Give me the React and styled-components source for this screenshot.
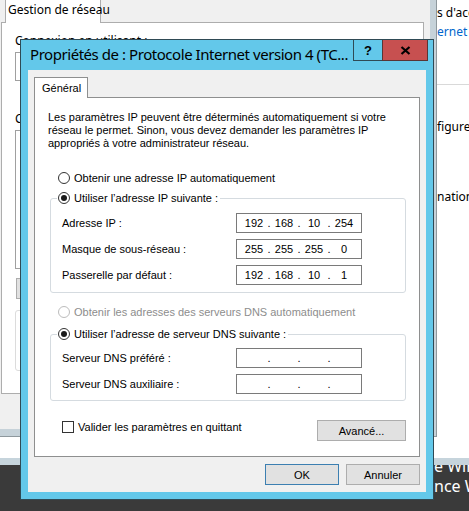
import React from "react";
import styled, { createGlobalStyle } from "styled-components";

const GlobalStyle = createGlobalStyle`
  html, body {
    margin: 0;
    padding: 0;
  }

  body {
    width: 469px;
    height: 511px;
    overflow: hidden;
    background: #3a3a3a;
    font-family: "Liberation Sans", Arial, sans-serif;
    font-size: 11px;
    color: #000;
  }

  * {
    box-sizing: border-box;
  }
`;

const Desktop = styled.div`
  position: relative;
  width: 469px;
  height: 511px;
  overflow: hidden;
  background: #3a3a3a;
`;

const Watermark = styled.div`
  position: absolute;
  left: 434px;
  top: 456px;
  color: #fff;
  font-family: "Noto Sans", sans-serif;
  font-size: 16px;
  line-height: 20px;
  white-space: nowrap;
`;

/* window behind everything (network center) */
const BackWindow = styled.div`
  position: absolute;
  left: 0;
  top: 0;
  right: 0;
  height: 465px;
  background: #fff;
  border-bottom: 7px solid #c6d4dc;
  padding: 5px 0 0 437px;
  overflow: hidden;
  font-family: "Noto Sans", sans-serif;
  font-size: 12px;
  line-height: 16px;
  white-space: nowrap;
`;

const SideLine = styled.div`
  margin-top: ${(p) => p.$gap || 0}px;
  color: ${(p) => (p.$link ? "#0066cc" : "#000")};
`;

const SideRule = styled.div`
  height: 1px;
  margin-top: ${(p) => p.$gap}px;
  background: #d9d9d9;
`;

/* network adapter properties window */
const HostWindow = styled.div`
  position: absolute;
  left: -8px;
  top: -40px;
  width: 445px;
  height: 477px;
  border: 1px solid #8e989d;
  background: #c6d2d9;
  padding: 39px 6px 6px;
`;

const HostClient = styled.div`
  height: 430px;
  background: #f0f0f0;
  padding-left: 2px;
  font-family: "Noto Sans", sans-serif;
  font-size: 12px;
  line-height: 14px;
  white-space: nowrap;
`;

const HostTab = styled.div`
  position: relative;
  z-index: 1;
  width: 96px;
  height: 24px;
  margin: -1px 0 -1px 4px;
  padding: 2px 0 0 2px;
  line-height: 16px;
  background: #fff;
  border: 1px solid #adadad;
  border-bottom: none;
`;

const HostPanel = styled.div`
  width: 423px;
  height: 372px;
  padding: 11px 13px 0;
  background: #fff;
  border: 1px solid #adadad;
`;

const HostLabel = styled.div`
  margin-top: ${(p) => p.$gap || 0}px;
`;

const HostBox = styled.div`
  height: ${(p) => p.$h}px;
  margin-top: 4px;
  border: 1px solid #a0a0a0;
`;

const HostButton = styled.div`
  width: 90px;
  height: 21px;
  margin: 9px 0 0 1px;
  background: #e1e1e1;
  border: 1px solid #adadad;
`;

const HostGroup = styled.div`
  height: 61px;
  margin-top: 11px;
  border: 1px solid #dcdcdc;
  border-radius: 3px;
`;

/* IPv4 dialog */
const Dialog = styled.div`
  position: absolute;
  left: 20px;
  top: 39px;
  width: 414px;
  height: 461px;
  display: flex;
  flex-direction: column;
  padding: 0 7px 7px;
  background: #63c8ea;
  border: 1px solid #2f4a55;
`;

const TitleBar = styled.div`
  height: 30px;
  display: flex;
  align-items: flex-start;
  justify-content: space-between;
`;

const Title = styled.div`
  flex: 1;
  min-width: 0;
  overflow: hidden;
  padding: 3px 0 0 2px;
  font-family: "Noto Sans", sans-serif;
  font-size: 15px;
  letter-spacing: -0.45px;
  line-height: 22px;
  white-space: nowrap;
`;

const CaptionButtons = styled.div`
  flex: none;
  display: flex;
  margin-right: -2px;
`;

const CaptionButton = styled.div`
  width: ${(p) => (p.$close ? 46 : 29)}px;
  height: 21px;
  display: flex;
  align-items: center;
  justify-content: center;
  background: ${(p) => (p.$close ? "#c75050" : "transparent")};
  border: 1px solid ${(p) => (p.$close ? "#5a3434" : "#2f4a55")};
  border-top: none;
  border-right: ${(p) => (p.$close ? "1px solid #5a3434" : "none")};
  font-family: "Liberation Sans", Arial, sans-serif;
  font-size: 13px;
  font-weight: bold;
`;

const Client = styled.div`
  flex: 1;
  display: flex;
  flex-direction: column;
  padding: 7px 6px;
  background: #f0f0f0;
`;

const Tab = styled.div`
  position: relative;
  z-index: 1;
  align-self: flex-start;
  width: 54px;
  height: 21px;
  margin-bottom: -1px;
  padding: 4px 0 0 7px;
  line-height: 13px;
  background: #fff;
  border: 1px solid #8e8f8f;
  border-bottom: none;
`;

const Panel = styled.div`
  height: 360px;
  display: flex;
  flex-direction: column;
  padding: 13px 13px 0;
  background: #fff;
  border: 1px solid #8e8f8f;
`;

const Intro = styled.p`
  margin: 0;
  line-height: 13px;
  white-space: nowrap;
`;

const Choice = styled.label`
  display: flex;
  align-items: center;
  gap: 4px;
  height: 14px;
  margin: ${(p) => p.$gap || 0}px 0 0 10px;
  color: ${(p) => (p.$disabled ? "#8d8d8d" : "#000")};
  white-space: nowrap;
`;

const Radio = styled.span`
  flex: none;
  width: 12px;
  height: 12px;
  display: inline-flex;
  align-items: center;
  justify-content: center;
  border-radius: 50%;
  background: #fff;
  border: 1px solid ${(p) => (p.$disabled ? "#bcbcbc" : "#333")};

  &::after {
    content: "";
    display: ${(p) => (p.$checked ? "block" : "none")};
    width: 6px;
    height: 6px;
    border-radius: 50%;
    background: #1a1a1a;
  }
`;

const Group = styled.fieldset`
  min-width: 0;
  margin: ${(p) => p.$gap}px 0 0 2px;
  padding: ${(p) => p.$top}px 0 ${(p) => p.$bottom}px 6px;
  border: 1px solid #d5dbe0;
  border-radius: 3px;
`;

const Legend = styled.legend`
  display: flex;
  align-items: center;
  gap: 4px;
  height: 14px;
  padding: 0 2px 0 1px;
  white-space: nowrap;
`;

const FieldGrid = styled.div`
  display: grid;
  grid-template-columns: 174px 126px;
  row-gap: 6px;
  align-items: center;
  padding-left: 5px;
  white-space: nowrap;
`;

const IpBox = styled.div`
  height: 20px;
  display: flex;
  align-items: center;
  padding-left: 5px;
  background: #fff;
  border: 1px solid #7a7a7a;
`;

const Octet = styled.span`
  width: 24px;
  text-align: center;
`;

const Dot = styled.span`
  width: 6px;
  text-align: center;
`;

const Footer = styled.div`
  display: flex;
  align-items: flex-start;
  justify-content: space-between;
  margin-top: 19px;
`;

const Check = styled.label`
  display: flex;
  align-items: center;
  gap: 4px;
  height: 14px;
  margin-left: 14px;
  white-space: nowrap;
`;

const CheckBox = styled.span`
  width: 12px;
  height: 12px;
  background: #fff;
  border: 1px solid #333;
`;

const Button = styled.div`
  width: ${(p) => p.$w}px;
  height: 21px;
  display: flex;
  align-items: center;
  justify-content: center;
  background: #e1e1e1;
  border: 1px solid ${(p) => (p.$default ? "#3c7fb1" : "#adadad")};
`;

const ButtonRow = styled.div`
  display: flex;
  justify-content: flex-end;
  gap: 7px;
  margin-top: 7px;
`;

const IpField = ({ value }) => {
  const parts = value ? value.split(".") : ["", "", "", ""];
  return (
    <IpBox>
      {parts.map((part, i) => (
        <React.Fragment key={i}>
          {i > 0 && <Dot>.</Dot>}
          <Octet>{part}</Octet>
        </React.Fragment>
      ))}
    </IpBox>
  );
};

const CloseGlyph = () => (
  <svg width="11" height="9" viewBox="0 0 11 9">
    <path d="M1.5 1 L9.5 8 M9.5 1 L1.5 8" stroke="#000" strokeWidth="2.2" />
  </svg>
);

const App = () => {
  return (
    <Desktop>
      <GlobalStyle />

      <Watermark>
        <div>e Windows</div>
        <div>nce Windows</div>
      </Watermark>

      <BackWindow>
        <SideLine>s d'accès :</SideLine>
        <SideLine $gap={3} $link>
          ernet
        </SideLine>
        <SideRule $gap={44} />
        <SideLine $gap={34}>figurer</SideLine>
        <SideLine $gap={54}>nations</SideLine>
      </BackWindow>

      <HostWindow>
        <HostClient>
          <HostTab>Gestion de réseau</HostTab>
          <HostPanel>
            <HostLabel>Connexion en utilisant :</HostLabel>
            <HostBox $h={29} />
            <HostLabel $gap={31}>
              Cette connexion utilise les éléments suivants :
            </HostLabel>
            <HostBox $h={139} />
            <HostButton />
            <HostGroup />
          </HostPanel>
        </HostClient>
      </HostWindow>

      <Dialog>
        <TitleBar>
          <Title>Propriétés de : Protocole Internet version 4 (TC...</Title>
          <CaptionButtons>
            <CaptionButton>?</CaptionButton>
            <CaptionButton $close>
              <CloseGlyph />
            </CaptionButton>
          </CaptionButtons>
        </TitleBar>

        <Client>
          <Tab>Général</Tab>
          <Panel>
            <Intro>
              Les paramètres IP peuvent être déterminés automatiquement si votre
              <br />
              réseau le permet. Sinon, vous devez demander les paramètres IP
              <br />
              appropriés à votre administrateur réseau.
            </Intro>

            <Choice $gap={21}>
              <Radio />
              Obtenir une adresse IP automatiquement
            </Choice>

            <Group $gap={6} $top={8} $bottom={7}>
              <Legend>
                <Radio $checked />
                Utiliser l’adresse IP suivante :
              </Legend>
              <FieldGrid>
                <span>Adresse IP :</span>
                <IpField value="192.168.10.254" />
                <span>Masque de sous-réseau :</span>
                <IpField value="255.255.255.0" />
                <span>Passerelle par défaut :</span>
                <IpField value="192.168.10.1" />
              </FieldGrid>
            </Group>

            <Choice $gap={12} $disabled>
              <Radio $disabled />
              Obtenir les adresses des serveurs DNS automatiquement
            </Choice>

            <Group $gap={8} $top={7} $bottom={6}>
              <Legend>
                <Radio $checked />
                Utiliser l’adresse de serveur DNS suivante :
              </Legend>
              <FieldGrid>
                <span>Serveur DNS préféré :</span>
                <IpField />
                <span>Serveur DNS auxiliaire :</span>
                <IpField />
              </FieldGrid>
            </Group>

            <Footer>
              <Check>
                <CheckBox />
                Valider les paramètres en quittant
              </Check>
              <Button $w={89}>Avancé...</Button>
            </Footer>
          </Panel>

          <ButtonRow>
            <Button $w={74} $default>
              OK
            </Button>
            <Button $w={74}>Annuler</Button>
          </ButtonRow>
        </Client>
      </Dialog>
    </Desktop>
  );
};

export default App;
